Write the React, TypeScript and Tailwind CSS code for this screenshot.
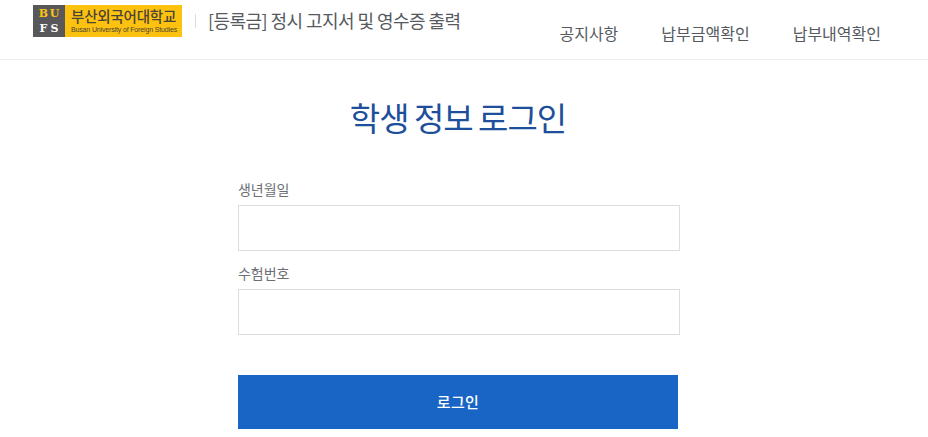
export default function App() {
  return (
    <div className="h-[437px] w-full overflow-hidden bg-white font-['Noto_Sans_CJK_KR','Noto_Sans',sans-serif]">
      <header className="flex h-[60px] border-b border-[#eeeeee] pl-[33px] pr-[47px]">
        <div className="mt-[5px] flex h-[32px] w-[149px]">
          <div className="grid h-full w-[32px] shrink-0 grid-cols-2 place-items-center bg-[#58585a] px-[5px] py-[1px] font-['DejaVu_Serif',serif] text-[11px] font-bold leading-none">
            <span className="text-[#fdc210]">B</span>
            <span className="text-[#fdc210]">U</span>
            <span className="text-white">F</span>
            <span className="text-white">S</span>
          </div>
          <div className="flex w-[117px] shrink-0 flex-col items-start overflow-hidden bg-[#fdc210] pl-[6px] pt-[2px] text-[#4a4436]">
            <span className="whitespace-nowrap text-[14.5px] font-medium leading-[18px] tracking-[-0.2px]">부산외국어대학교</span>
            <span className="whitespace-nowrap font-['Liberation_Sans',sans-serif] text-[7px] leading-[9px] tracking-[-0.15px]">Busan University of Foreign Studies</span>
          </div>
        </div>
        <div className="ml-[13px] mt-[14px] h-[14px] w-px bg-[#dddddd]" />
        <div className="ml-[12px] mt-[7px] text-[18px] leading-[27px] tracking-[-0.55px] text-[#555a60]">[등록금] 정시 고지서 및 영수증 출력</div>
        <nav className="ml-auto mt-[21px] flex gap-[43px] text-[16px] leading-[24px] text-[#555a60]">
          <span>공지사항</span>
          <span>납부금액확인</span>
          <span>납부내역확인</span>
        </nav>
      </header>
      <main className="flex flex-col pl-[238px]">
        <h1 className="mt-[33px] w-[440px] text-center text-[33px] leading-[48px] tracking-[-1px] [word-spacing:-1px] text-[#1d4f9c]">학생 정보 로그인</h1>
        <label className="mt-[38px] text-[14px] leading-[21px] tracking-[-0.05px] text-[#6b6f73]">생년월일</label>
        <input className="mt-[5px] h-[46px] w-[442px] border border-[#dddddd] bg-white" />
        <label className="mt-[12px] text-[14px] leading-[21px] tracking-[-0.05px] text-[#6b6f73]">수험번호</label>
        <input className="mt-[5px] h-[46px] w-[442px] border border-[#dddddd] bg-white" />
        <button className="mt-[40px] h-[54px] w-[440px] bg-[#1865c5] pt-[1px] text-[15px] font-medium tracking-[0.3px] text-white">로그인</button>
      </main>
    </div>
  );
}
